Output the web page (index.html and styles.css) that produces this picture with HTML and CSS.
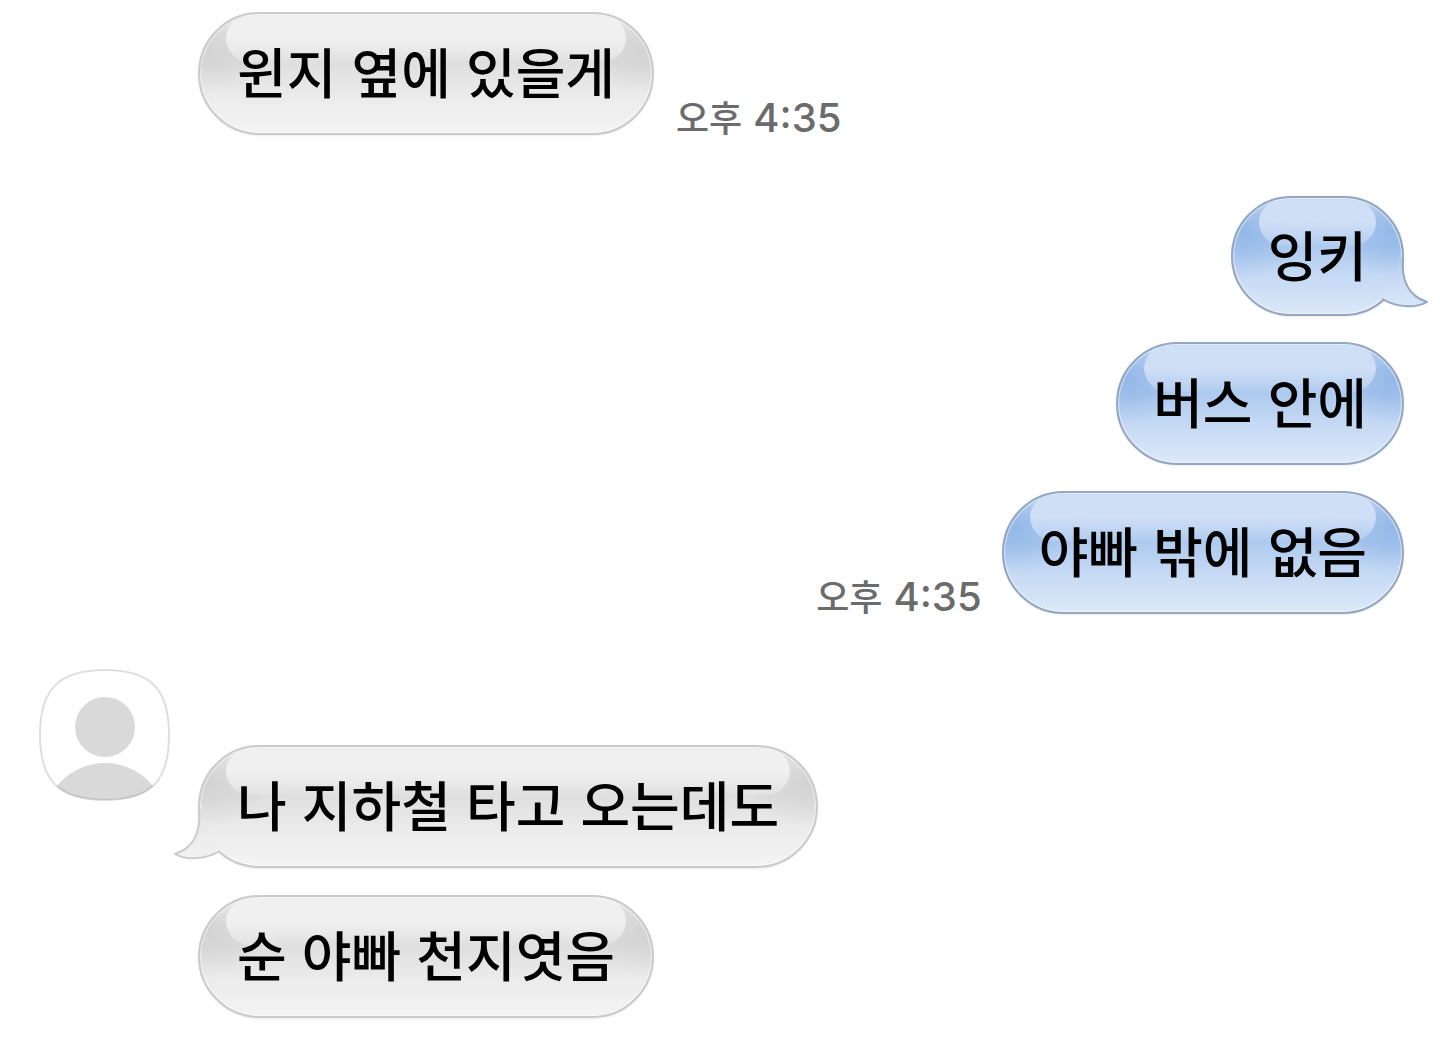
FILE: index.html
```html
<!DOCTYPE html>
<html lang="ko">
<head>
<meta charset="utf-8">
<meta name="viewport" content="width=device-width, initial-scale=1">
<title>채팅</title>
<link rel="stylesheet" href="styles.css">
</head>
<body>
<main class="chat">
  <section class="group received">
    <div class="stack">
      <div class="row">
        <p class="bubble">윈지 옆에 있을게</p>
        <time class="time" datetime="16:35"><span class="meridiem">오후</span><span>4:35</span></time>
      </div>
    </div>
  </section>

  <section class="group sent">
    <div class="stack">
      <div class="row">
        <p class="bubble compact">잉키
          <svg class="tail" viewBox="0 0 60 64" aria-hidden="true">
            <defs>
              <linearGradient id="blue-tail" gradientUnits="userSpaceOnUse" x1="0" y1="0" x2="0" y2="60">
                <stop offset="0" stop-color="#acc8ee"/><stop offset=".5" stop-color="#cbddf5"/><stop offset="1" stop-color="#dce9f9"/>
              </linearGradient>
            </defs>
            <path d="M27 5C29 26 22 43 3 49C15 56 34 54 48 46L50 44A57 57 0 0 1 31 4Z" fill="url(#blue-tail)"/>
            <path class="tail-line" d="M27 4C29 26 22 43 3 49C15 56 34 54 48 46"/>
          </svg>
        </p>
      </div>
      <div class="row"><p class="bubble">버스 안에</p></div>
      <div class="row">
        <time class="time" datetime="16:35"><span class="meridiem">오후</span><span>4:35</span></time>
        <p class="bubble">야빠 밖에 없음</p>
      </div>
    </div>
  </section>

  <section class="group received with-avatar">
    <svg class="avatar" viewBox="0 0 132 132" role="img" aria-label="프로필">
      <defs>
        <clipPath id="avatar-shape">
          <path d="M66 1C112 1 130 20 130 66S112 131 66 131S1 112 1 66S20 1 66 1Z"/>
        </clipPath>
      </defs>
      <g clip-path="url(#avatar-shape)" fill="#d9d9d9">
        <circle cx="66" cy="58" r="30"/>
        <circle cx="66" cy="156" r="62"/>
      </g>
      <path d="M66 1C112 1 130 20 130 66S112 131 66 131S1 112 1 66S20 1 66 1Z" fill="none" stroke="#000" stroke-opacity=".13" stroke-width="2"/>
    </svg>
    <div class="stack">
      <div class="row">
        <p class="bubble">나 지하철 타고 오는데도
          <svg class="tail" viewBox="0 0 60 64" aria-hidden="true">
            <defs>
              <linearGradient id="gray-tail" gradientUnits="userSpaceOnUse" x1="0" y1="0" x2="0" y2="60">
                <stop offset="0" stop-color="#dfdfdf"/><stop offset=".5" stop-color="#ebebeb"/><stop offset="1" stop-color="#f4f4f4"/>
              </linearGradient>
            </defs>
            <path d="M27 5C29 26 22 43 3 49C15 56 34 54 48 46L50 44A57 57 0 0 1 31 4Z" fill="url(#gray-tail)"/>
            <path class="tail-line" d="M27 4C29 26 22 43 3 49C15 56 34 54 48 46"/>
          </svg>
        </p>
      </div>
      <div class="row"><p class="bubble">순 야빠 천지엿음</p></div>
    </div>
  </section>
</main>
</body>
</html>
```
FILE: styles.css
```css
* { box-sizing: border-box; }

body {
  margin: 0;
  background: #fff;
  color: #000;
  font-family: "Noto Sans CJK KR", "Noto Sans", sans-serif;
}

.chat {
  display: flex;
  flex-direction: column;
  padding: 12px 36px 20px 39px;
}

.group {
  display: grid;
  grid-template-columns: 132px 1fr;
  column-gap: 27px;
}

.stack {
  grid-column: 2;
  display: flex;
  flex-direction: column;
  align-items: flex-start;
  gap: 27px;
}

.sent {
  display: block;
  margin-top: 61px;
}

.sent .stack {
  align-items: flex-end;
  gap: 26px;
}

.with-avatar { margin-top: 55px; }
.with-avatar .stack { padding-top: 76px; }

.avatar {
  width: 132px;
  height: 132px;
}

.row {
  display: flex;
  align-items: flex-end;
  gap: 22px;
}

.bubble {
  --line: #cacaca;
  --gloss: #f0f0f0;
  position: relative;
  isolation: isolate;
  margin: 0;
  padding: 17px 37px 22px;
  border: 2px solid var(--line);
  border-radius: 62px;
  font-size: 54px;
  font-weight: 500;
  line-height: 80px;
  white-space: nowrap;
  background:
    radial-gradient(60px 48px at 10px 28%, rgba(180, 180, 180, .35), rgba(180, 180, 180, 0)),
    radial-gradient(60px 48px at calc(100% - 10px) 28%, rgba(180, 180, 180, .35), rgba(180, 180, 180, 0)),
    linear-gradient(#ececec, #dfdfdf 42%, #ebebeb 68%, #f4f4f4);
  background-origin: border-box;
  box-shadow: inset 0 0 1px 1px rgba(255, 255, 255, .6), 0 1px 2px rgba(0, 0, 0, .08);
}

/* glossy highlight: fades out downwards except near its two ends */
.bubble::before {
  content: "";
  position: absolute;
  z-index: -1;
  top: 2px;
  left: 26px;
  right: 26px;
  height: 46px;
  border-radius: 28px 28px 30px 30px;
  background: var(--gloss);
  mask-image:
    linear-gradient(90deg, rgba(0, 0, 0, .5), transparent 60px, transparent calc(100% - 60px), rgba(0, 0, 0, .5)),
    linear-gradient(#000 45%, transparent);
}

.sent .row { gap: 20px; }

.sent .bubble {
  --line: #94a6c0;
  --gloss: #cfdff6;
  padding-left: 35px;
  padding-right: 35px;
  background:
    radial-gradient(60px 48px at 10px 28%, rgba(112, 160, 222, .5), rgba(112, 160, 222, 0)),
    radial-gradient(60px 48px at calc(100% - 10px) 28%, rgba(112, 160, 222, .5), rgba(112, 160, 222, 0)),
    linear-gradient(#c5d9f4, #aecaef 42%, #c6daf4 68%, #dde9f9);
  background-origin: border-box;
}

.sent .compact {
  padding-top: 16px;
  padding-bottom: 20px;
}

.tail {
  position: absolute;
  z-index: -1;
  left: -28px;
  bottom: -3px;
  width: 60px;
  height: 64px;
  overflow: visible;
}

.sent .tail {
  left: auto;
  right: -28px;
  transform: scaleX(-1);
}

.tail-line {
  fill: none;
  stroke: var(--line);
  stroke-width: 2;
  stroke-linejoin: round;
}

.time {
  display: flex;
  align-items: baseline;
  gap: 11px;
  color: #6b6b6b;
  font-family: Inter, "Noto Sans CJK KR", sans-serif;
  font-size: 40px;
  font-weight: 500;
  line-height: 32px;
}

.meridiem { font-size: 36px; }
```
